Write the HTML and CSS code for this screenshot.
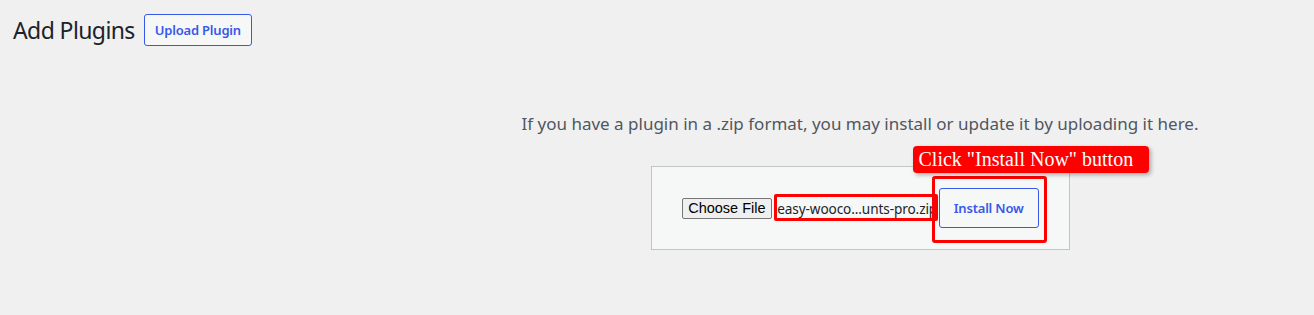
FILE: index.html
```html
<!DOCTYPE html>
<html lang="en">
<head>
  <meta charset="UTF-8">
  <meta name="viewport" content="width=device-width, initial-scale=1.0">
  <title>Add Plugins</title>
  <link rel="stylesheet" href="styles.css">
</head>
<body>
  <div class="wrap">
    <div class="page-header">
      <h1>Add Plugins</h1>
      <button class="upload-btn">Upload Plugin</button>
    </div>

    <div class="upload-plugin">
      <p class="install-help">If you have a plugin in a .zip format, you may install or update it by uploading it here.</p>
      <form class="upload-form">
        <button type="button" class="choose-file">Choose File</button>
        <span class="file-name">easy-wooco...unts-pro.zip</span>
        <button type="button" class="install-btn">Install Now</button>

        <span class="mark mark-file"></span>
        <span class="mark mark-install"></span>
        <span class="callout">Click "Install Now" button</span>
      </form>
    </div>
  </div>
</body>
</html>
```

FILE: styles.css
```css
body {
  margin: 0;
  background-color: #f0f0f1;
  color: #1d2327;
  font-family: "Noto Sans", "Open Sans", sans-serif;
}

.page-header {
  display: flex;
  align-items: center;
  gap: 9px;
  padding: 14px 0 0 13px;
}

.page-header h1 {
  margin: 0;
  font-size: 23px;
  font-weight: 400;
  letter-spacing: -0.6px;
  color: #1d2327;
}

.upload-btn,
.install-btn {
  background-color: #f6f7f7;
  border: 1px solid #3858e9;
  border-radius: 3px;
  color: #3858e9;
  font-family: "Noto Sans", sans-serif;
  font-size: 13px;
  font-weight: 600;
  cursor: pointer;
}

.upload-btn {
  height: 32px;
  padding: 0 10px;
  letter-spacing: -0.2px;
}

.upload-plugin {
  margin-left: 406px;
  text-align: center;
}

.install-help {
  margin: 66px 0 0;
  font-size: 17px;
  color: #50575e;
}

.upload-form {
  position: relative;
  display: inline-flex;
  align-items: center;
  box-sizing: border-box;
  width: 419px;
  height: 84px;
  margin-top: 31px;
  padding: 0 30px;
  background-color: #f6f7f7;
  border: 1px solid #c3c4c7;
}

.choose-file {
  width: 91px;
  height: 21px;
  padding: 0;
  background-color: #efefef;
  border: 1px solid #767676;
  border-radius: 2px;
  font-family: "Liberation Sans", Arial, sans-serif;
  font-size: 14.5px;
  color: #000;
}

.file-name {
  width: 159px;
  margin: 0 3px 0 5px;
  overflow: hidden;
  white-space: nowrap;
  text-align: left;
  font-size: 13.6px;
  letter-spacing: -0.1px;
  color: #1d2327;
}

.install-btn {
  width: 100px;
  height: 40px;
  letter-spacing: -0.2px;
}

.mark {
  position: absolute;
  box-sizing: border-box;
  border: 3px solid #f00;
  border-radius: 2px;
}

.mark-file {
  left: 122px;
  top: 27px;
  width: 164px;
  height: 27px;
}

.mark-install {
  left: 280px;
  top: 9px;
  width: 115px;
  height: 67px;
  border-radius: 3px;
}

.callout {
  position: absolute;
  left: 261px;
  top: -21px;
  width: 236px;
  height: 27px;
  box-sizing: border-box;
  padding-left: 6px;
  background-color: #f00;
  border-radius: 4px;
  box-shadow: 2px 2px 4px rgba(0, 0, 0, 0.3);
  color: #fff;
  font-family: "Liberation Serif", serif;
  font-size: 20px;
  font-weight: 400;
  line-height: 27px;
  text-align: left;
  white-space: nowrap;
}
```
